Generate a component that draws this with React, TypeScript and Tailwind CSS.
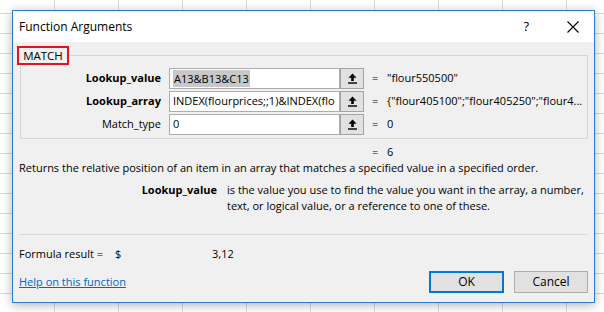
import type { ReactNode } from 'react'

const FONT = "font-['Open_Sans','Noto_Sans',sans-serif]"

function PickButton() {
  return (
    <div className="w-[24px] h-full flex items-center justify-center bg-[#e1e1e1] border border-[#a3a3a3]">
      <svg width="9" height="11" viewBox="0 0 9 11">
        <path d="M4.5 0.5 L8.5 4.8 H5.8 V8 H3.2 V4.8 H0.5 Z" fill="#000" />
        <rect x="0" y="9.3" width="9" height="1.4" fill="#000" />
      </svg>
    </div>
  )
}

interface ArgProps {
  label: string
  bold?: boolean
  input: ReactNode
  value: string
}

function ArgRow({ label, bold, input, value }: ArgProps) {
  return (
    <div className="flex items-center h-[21px]">
      <div className={`w-[140px] text-right ${bold ? 'font-bold' : ''}`}>{label}</div>
      <div className="ml-[8px] flex h-full">
        <div className="w-[171px] h-full border border-[#adadad] bg-white flex items-center pl-[3px] overflow-hidden whitespace-nowrap">
          {input}
        </div>
        <PickButton />
      </div>
      <span className="ml-[8px] w-[15px]">=</span>
      <span className="whitespace-nowrap">{value}</span>
    </div>
  )
}

export default function App() {
  return (
    <div
      className={`w-[604px] h-[312px] overflow-hidden pt-[10px] pl-[12px] bg-white bg-[linear-gradient(to_right,#dadada_1px,transparent_1px),linear-gradient(to_bottom,#dadada_1px,transparent_1px)] bg-[size:64px_20px] bg-[position:54px_13px] ${FONT} text-[11px] text-black`}
    >
      <div className="w-[583px] h-[293px] flex flex-col border border-[#2b7bd3] bg-[#f0f0f0] shadow-[0_2px_10px_rgba(0,0,0,0.3)]">
        {/* Title bar */}
        <div className="h-[31px] bg-white flex items-center pl-[6px] pr-[15px] text-[12px]">
          <span className="flex-1">Function Arguments</span>
          <span className="text-[13px] mr-[38px]">?</span>
          <svg width="12" height="12" viewBox="0 0 12 12">
            <path d="M0.5 0.5 L11.5 11.5 M11.5 0.5 L0.5 11.5" stroke="#000" strokeWidth="1.1" />
          </svg>
        </div>

        {/* Body */}
        <div className="flex-1 flex flex-col">
          <div className="relative mt-[13px] ml-[7px] mr-[6px] border border-[#d5d5d5] pt-[12px] pb-[3px] flex flex-col gap-[2px]">
            <div className="absolute -top-[10px] -left-[4px] w-[52px] h-[19px] border-2 border-[#e4141b] bg-[#f0f0f0] flex items-center justify-center text-[11.5px] leading-none">
              MATCH
            </div>
            <ArgRow
              label="Lookup_value"
              bold
              input={<span className="bg-[#c8c8c8] px-[1px] leading-[17px]">A13&amp;B13&amp;C13</span>}
              value={'"flour550500"'}
            />
            <ArgRow
              label="Lookup_array"
              bold
              input={<span>INDEX(flourprices;;1)&amp;INDEX(flo</span>}
              value={'{"flour405100";"flour405250";"flour4...'}
            />
            <ArgRow label="Match_type" input={<span>0</span>} value="0" />
          </div>

          <div className="mt-[5px] h-[16px] leading-[16px] pl-[359px] flex">
            <span className="w-[15px]">=</span>
            <span>6</span>
          </div>

          <div className="h-[16px] leading-[16px] pl-[6px] whitespace-nowrap">
            Returns the relative position of an item in an array that matches a specified value in a specified order.
          </div>

          <div className="mt-[6px] flex leading-[16px]">
            <div className="w-[204px] text-right font-bold">Lookup_value</div>
            <div className="ml-[10px] whitespace-nowrap">
              is the value you use to find the value you want in the array, a number,
              <br />
              text, or logical value, or a reference to one of these.
            </div>
          </div>

          <div className="mt-[20px] ml-[6px] mr-[6px] h-px bg-[#d9d9d9]" />

          <div className="mt-[11px] h-[16px] leading-[16px] pl-[6px] flex">
            <span className="w-[96px]">Formula result =</span>
            <span className="w-[97px]">$</span>
            <span>3,12</span>
          </div>

          <div className="mt-[9px] flex items-center pl-[6px] pr-[6px]">
            <a className="flex-1 text-[#0066cc] underline leading-[16px] cursor-pointer">Help on this function</a>
            <button className="w-[75px] h-[22px] border-2 border-[#0078d7] bg-[#e1e1e1] text-[12px]">OK</button>
            <button className="ml-[10px] w-[74px] h-[22px] border border-[#adadad] bg-[#e1e1e1] text-[12px]">Cancel</button>
          </div>
        </div>
      </div>
    </div>
  )
}
